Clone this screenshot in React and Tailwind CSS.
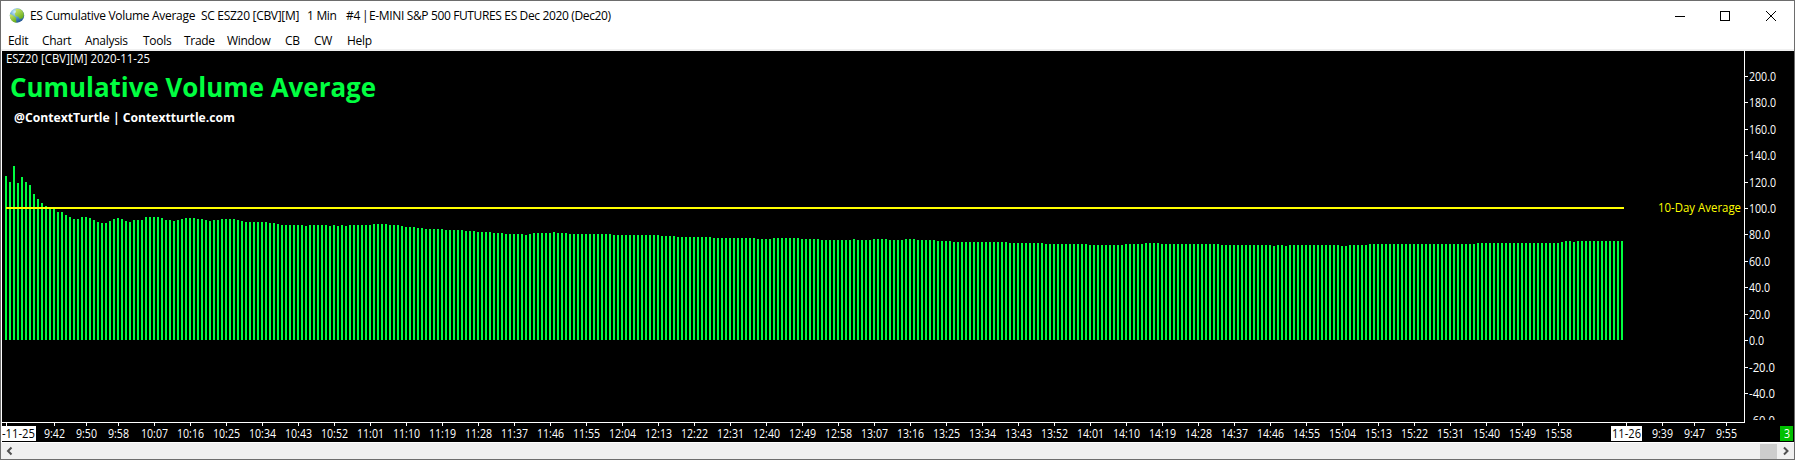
const runs = [
  [176], [182], [166], [183], [177], [182], [185], [194], [199], [203], [206], [208], [209], [212, 2], [215], [217], [219, 2],
  [217, 2], [218], [220], [222], [223, 2], [221], [219], [218], [219], [221], [222], [220, 3], [217, 4], [218], [220, 2], [221],
  [220], [219], [218, 3], [219, 2], [220], [221], [220, 2], [219, 4], [220], [221], [222, 6], [223, 2], [224], [225, 5],
  [225], [226], [225, 5], [226], [225], [226], [225], [226], [225, 6], [224, 4], [225, 3], [226], [227, 3], [228, 2], [229, 5],
  [230, 5], [231, 3], [232, 4], [233, 3], [234, 5], [235], [234], [233, 5], [232], [233, 3], [234, 11], [235, 12], [236, 4],
  [237, 9], [238, 11], [239, 4], [238, 7],
  [239, 5], [240, 8], [239], [240, 4], [239, 4], [240, 4], [239, 3], [240, 5], [241, 4], [242, 14], [243, 9], [244, 11],
  [245, 9], [244, 5], [243, 4], [244, 15], [245, 13], [246], [245, 2], [246], [245, 3],
  [245, 10], [246, 2], [245, 5], [244, 27], [243, 21], [242], [241, 2], [242], [241, 12],
];
const barTops = runs.flatMap(([top, count = 1]) => Array(count).fill(top));

const valueTicks = [
  ["200.0", 76], ["180.0", 102], ["160.0", 129], ["140.0", 155], ["120.0", 182], ["100.0", 208], ["80.0", 234],
  ["60.0", 261], ["40.0", 287], ["20.0", 314], ["0.0", 340], ["-20.0", 367], ["-40.0", 393], ["-60.0", 420],
];

const timeLabel = (m) => `${Math.floor(m / 60)}:${String(m % 60).padStart(2, "0")}`;
const timeTicks = [
  ...[582, 590, 598].map((m) => [timeLabel(m), 6 + (m - 570) * 4]),
  ...Array.from({ length: 40 }, (_, i) => 607 + i * 9).map((m) => [timeLabel(m), 6 + (m - 570) * 4]),
  ["9:39", 1662], ["9:47", 1694], ["9:55", 1726],
];

const labelWidth = (s) => [...s].reduce((w, c) => w + (c === "." ? 3 : c === ":" ? 3 : c === "-" ? 5 : 6), 0);

function Label({ width, children, ...rest }) {
  return <text textLength={width} lengthAdjust="spacingAndGlyphs" {...rest}>{children}</text>;
}

function Globe() {
  return (
    <svg width="16" height="16" viewBox="0 0 16 16" className="shrink-0">
      <defs>
        <radialGradient id="sea" cx="35%" cy="25%" r="80%">
          <stop offset="0" stopColor="#d8effa" />
          <stop offset="0.45" stopColor="#5ba4d4" />
          <stop offset="1" stopColor="#1d4f8c" />
        </radialGradient>
        <linearGradient id="land" x1="0" y1="0" x2="0.6" y2="1">
          <stop offset="0" stopColor="#d8ea78" />
          <stop offset="1" stopColor="#6bb01c" />
        </linearGradient>
      </defs>
      <circle cx="8" cy="7.500" r="7.200" fill="url(#sea)" />
      <path d="M6.500 1.200c3-1 6 .3 7.600 2.800 1.200 2.200.9 4.500-.5 6.200l-2.800.8-1.500-2.200-2.800-.8-.8-2.600 1.300-1.500z" fill="url(#land)" />
      <path d="M.9 6l2.500 1 3.800 2.700-.2 2.300.6 2.600C3.500 14.500.3 11 .9 6z" fill="url(#land)" />
    </svg>
  );
}

function TitleBar() {
  return (
    <header className="flex h-[29px] items-center pl-[8px] text-black">
      <Globe />
      <h1 className="ml-[5px] flex flex-1 whitespace-pre text-[12px] leading-[16px] tracking-[-0.3px]">
        <span className="w-[171px]">ES Cumulative Volume Average</span>
        <span className="w-[106px]">SC ESZ20 [CBV][M]</span>
        <span className="w-[39px]">1 Min</span>
        <span className="w-[16px]">#4</span>
        <span className="w-[7px]">|</span>
        <span className="tracking-[-0.36px]">E-MINI S&amp;P 500 FUTURES ES Dec 2020 (Dec20)</span>
      </h1>
      <svg width="120" height="28" viewBox="1674 1 120 28" fill="none" stroke="#000" shapeRendering="crispEdges">
        <path d="M1675 15.500h10" />
        <rect x="1720.500" y="10.500" width="9" height="9" />
        <path d="M1766 10l10 10M1776 10l-10 10" shapeRendering="auto" />
      </svg>
    </header>
  );
}

function MenuBar() {
  return (
    <nav className="flex h-[19px] items-start pl-[7px] pt-[3px] text-[12px] leading-[16px] tracking-[-0.3px] text-black">
      <span className="w-[34px]">Edit</span>
      <span className="w-[43px]">Chart</span>
      <span className="w-[58px]">Analysis</span>
      <span className="w-[41px]">Tools</span>
      <span className="w-[43px]">Trade</span>
      <span className="w-[58px]">Window</span>
      <span className="w-[29px]">CB</span>
      <span className="w-[33px]">CW</span>
      <span>Help</span>
    </nav>
  );
}

function Chart() {
  return (
    <svg width="1792" height="371" viewBox="2 51 1792 371" className="block bg-black" shapeRendering="crispEdges" fontSize="12">
      {barTops.map((top, i) => <rect key={i} x={5 + i * 4} y={top} width="2" height={340 - top} fill="#00ff40" />)}
      <rect x="6" y="207" width="1618" height="2" fill="#ffff00" />
      <rect x="1744" y="51" width="1" height="371" fill="#fff" />
      {valueTicks.map(([label, y]) => (
        <g key={label} fill="#fff">
          {y < 400 && <rect x="1745" y={y} width="3" height="1" />}
          <Label x="1749" y={y + 5} width={labelWidth(label)}>{label}</Label>
        </g>
      ))}
      <rect x="1745" y="420" width="50" height="2" fill="#000" />
      <Label x="6" y="63" fill="#fff" width="144">ESZ20 [CBV][M] 2020-11-25</Label>
      <Label x="10" y="97" fill="#00ff40" fontSize="26.500" fontWeight="700" width="366">Cumulative Volume Average</Label>
      <Label x="14" y="122" fill="#fff" fontSize="12.500" fontWeight="700" width="221">@ContextTurtle | Contextturtle.com</Label>
      <Label x="1658" y="212" fill="#ffff00" width="83">10-Day Average</Label>
    </svg>
  );
}

function TimeAxis() {
  return (
    <svg width="1792" height="20" viewBox="2 422 1792 20" className="block bg-black" shapeRendering="crispEdges" fontSize="12">
      <rect x="2" y="422" width="1743" height="1" fill="#fff" />
      <rect x="6" y="423" width="1" height="3" fill="#fff" />
      <rect x="1626" y="423" width="1" height="3" fill="#fff" />
      {timeTicks.map(([label, x]) => (
        <g key={label + x} fill="#fff">
          <rect x={x} y="423" width="1" height="3" />
          <Label x={x + 0.5 - labelWidth(label) / 2} y="438" width={labelWidth(label)}>{label}</Label>
        </g>
      ))}
      <rect x="2" y="426" width="34" height="15" fill="#fff" />
      <Label x="2" y="438" width="33">-11-25</Label>
      <rect x="1611" y="426" width="31" height="15" fill="#fff" />
      <Label x="1612" y="438" width="29">11-26</Label>
      <rect x="1780" y="426" width="13" height="15" fill="#00c000" />
      <Label x="1784" y="438" width="6" fill="#fff">3</Label>
    </svg>
  );
}

function ScrollBar() {
  return (
    <div className="flex h-[17px] items-center border-t border-white bg-[#f0f0f0]">
      <svg width="17" height="16" fill="none" stroke="#505050" strokeWidth="2"><path d="M10.500 4.500L7 8l3.500 3.500" /></svg>
      <span className="ml-auto h-[15px] w-[17px] bg-[#cdcdcd]" />
      <svg width="17" height="16" fill="none" stroke="#505050" strokeWidth="2"><path d="M7 4.500L10.500 8 7 11.500" /></svg>
    </div>
  );
}

export default function App() {
  return (
    <main className="h-[460px] w-[1795px] overflow-hidden border border-[#6d6d6d] bg-white font-['Open_Sans','Noto_Sans',sans-serif]">
      <TitleBar />
      <MenuBar />
      <div className="h-[2px] bg-[#f0f0f0]" />
      <div className="pl-px">
        <Chart />
        <TimeAxis />
      </div>
      <ScrollBar />
    </main>
  );
}
